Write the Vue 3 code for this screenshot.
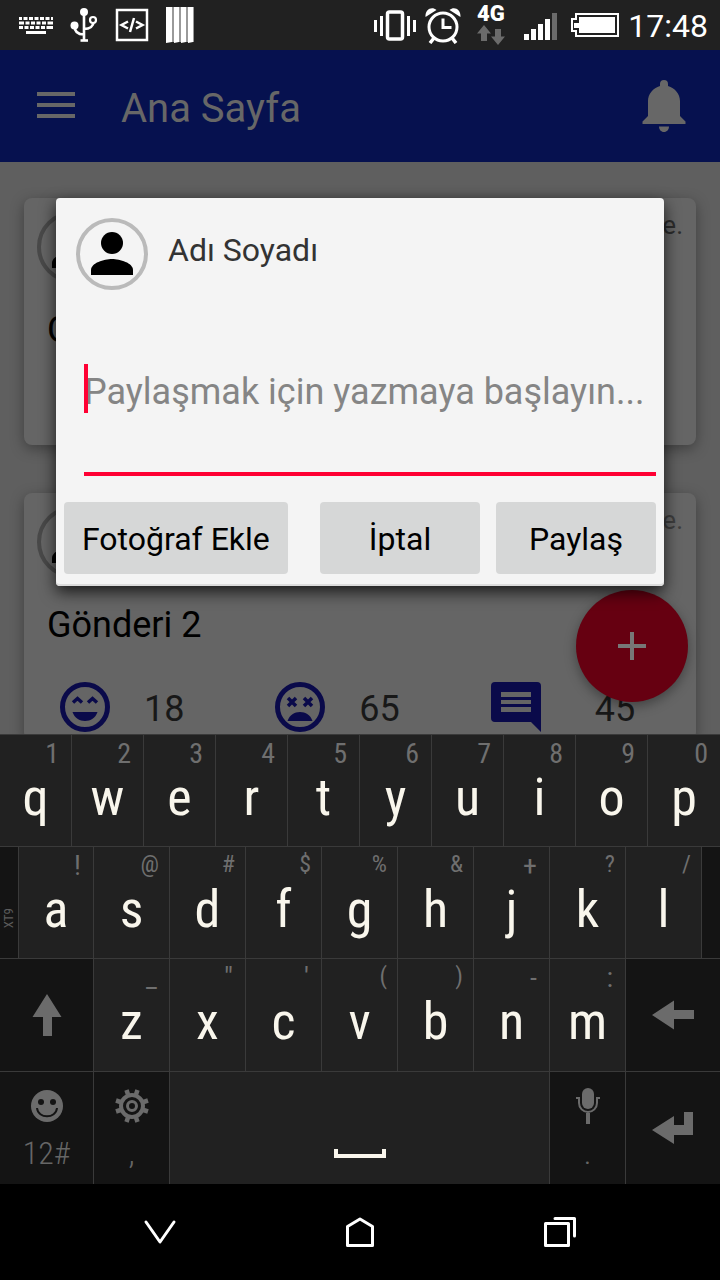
<script setup>
import { ref } from 'vue'

const posts = [
  { id: 1, title: 'Gönderi 1', when: 'önce.', likes: 18, dislikes: 65, comments: 45 },
  { id: 2, title: 'Gönderi 2', when: 'önce.', likes: 18, dislikes: 65, comments: 45 },
]
const message = ref('')

const k = (label, hint, small = false) => ({ label, hint, small })
const topRow = [...'qwertyuiop'].map((c, i) => k(c, String((i + 1) % 10)))
const homeRow = [
  k('a', '!'), k('s', '@', true), k('d', '#', true), k('f', '$', true), k('g', '%', true),
  k('h', '&', true), k('j', '+'), k('k', '?', true), k('l', '/', true),
]
const lowRow = [
  k('z', '_'), k('x', '"'), k('c', "'"), k('v', '(', true), k('b', ')', true), k('n', '-'), k('m', ':'),
]
</script>

<template>
  <div class="screen">
    <div class="status">
      <div class="tray">
        <svg width="34" height="36" viewBox="0 0 34 36" fill="none" stroke="#fff">
          <path d="M0 11.500h34" stroke-width="3" stroke-dasharray="3 1.5 4 1.5 4 1.5 4 1.5 4 1.5 4 1.5 3" />
          <path d="M0 16h34" stroke-width="3" stroke-dasharray="5 1.5 4 1.5 4 1.5 4 1.5 4 1.5 6 1" />
          <path d="M0 20.500h34" stroke-width="3" stroke-dasharray="4 1.5 4 1.5 4 1.5 4 1.5 4 1.5 7 1" />
          <path d="M7 25.500h20" stroke-width="3" />
        </svg>
        <svg width="28" height="36" viewBox="0 0 28 36" fill="none" stroke="#fff" stroke-width="2.6">
          <path d="M14 4v30M4.500 19c0 5 3 8.500 9.500 8.500M14 22c6 0 9.500-3 9.500-7" />
          <circle cx="14" cy="5" r="4" fill="#fff" stroke="none" />
          <circle cx="4.500" cy="18.500" r="4" fill="#fff" stroke="none" />
          <circle cx="23" cy="13" r="3" stroke-width="2.2" />
          <path d="M10.500 33.500h7.500" />
        </svg>
        <svg width="34" height="36" viewBox="0 0 34 36" fill="none" stroke="#fff">
          <path d="M2 3h30v30H2z" stroke-width="2.500" />
          <path d="M13 14.500l-6.500 3.500 6.500 3.500M21 14.500l6.500 3.500-6.500 3.500M19 11l-4 14" stroke-width="2.500" />
        </svg>
        <svg width="30" height="36" viewBox="0 0 30 36">
          <path d="M0 0h28v35H0z" fill="#9a9a9a" />
          <path d="M0 0h6v35l-6 1zM8 0h5v35l-5 1zM15 0h5v35l-5 1zM22 0h5v35l-5 1z" fill="#fff" />
        </svg>
      </div>
      <div class="tray right">
        <svg width="42" height="36" viewBox="0 0 42 36" fill="none" stroke="#fff">
          <rect x="13.500" y="5" width="15" height="27" rx="2" stroke-width="3.500" />
          <path d="M1.500 13v12M7.500 9v20M34.500 9v20M40.500 13v12" stroke-width="3" />
        </svg>
        <svg width="38" height="38" viewBox="0 0 38 38" fill="none" stroke="#fff">
          <circle cx="19" cy="21" r="14" stroke-width="3" />
          <path d="M19 12.500v9h8.500" stroke-width="3" />
          <path d="M10 32l-4 5M28 32l4 5" stroke-width="3.500" />
          <path d="M1.500 11C1 3 8 0 12.500 4zM36.500 11C37 3 30 0 25.500 4z" fill="#fff" stroke="none" />
        </svg>
        <svg width="38" height="50" viewBox="0 0 38 50">
          <text x="7" y="21" class="net">4G</text>
          <path d="M14 25l7 8.500h-4V41h-6v-7.500H7z" fill="#6b6b6b" />
          <path d="M28 45l7-8.500h-4V29h-6v7.500h-4z" fill="#6b6b6b" />
        </svg>
        <svg width="46" height="36" viewBox="0 0 46 36">
          <path d="M8 27h5v6H8zM15 22h5v11h-5zM22 17h5v16h-5zM29 12h5v21h-5z" fill="#fff" />
          <path d="M36 6h5v27h-5z" fill="#6b6b6b" />
        </svg>
        <svg width="50" height="36" viewBox="0 0 50 36">
          <path d="M6 7h42v22H6v-5H2V12h4z" fill="none" stroke="#fff" stroke-width="2" />
          <path d="M9 10h36v16H9v-5H4v-5h5z" fill="#fff" />
        </svg>
        <time>17:48</time>
      </div>
    </div>

    <div class="app">
      <header class="bar">
        <button class="plain" aria-label="Menü">
          <svg width="38" height="28" viewBox="0 0 38 28" stroke="#676767" stroke-width="4">
            <path d="M0 2h38M0 13h38M0 24h38" />
          </svg>
        </button>
        <h1>Ana Sayfa</h1>
        <button class="plain" aria-label="Bildirimler">
          <svg width="44" height="52" viewBox="0 0 44 52" fill="#676767">
            <path d="M18 6V4a4 4 0 0 1 8 0v2c7 2 12 8 12 15v15l5.500 5.500V44H.500v-2.500L6 36V21c0-7 5-13 12-15zM17 46.500h10c0 3-2 5.500-5 5.500s-5-2.500-5-5.500z" />
          </svg>
        </button>
      </header>

      <main class="feed">
        <article v-for="p in posts" :key="p.id" class="card" :class="{ seen: p.id === 2 }">
          <div class="card-head">
            <svg class="avatar" viewBox="0 0 72 72">
              <circle cx="36" cy="36" r="34" fill="none" stroke="#494949" stroke-width="4" />
              <circle cx="36" cy="25" r="11" />
              <path d="M15 57v-5c0-7 13-11 21-11s21 4 21 11v5z" />
            </svg>
            <span class="when">{{ p.when }}</span>
          </div>
          <h2>{{ p.title }}</h2>
          <div class="stats">
            <span class="stat">
              <svg width="50" height="50" viewBox="0 0 50 50" fill="none" stroke="#0a0a4a">
                <circle cx="25" cy="25" r="22.500" stroke-width="5" />
                <path d="M13 20.500l4.500-4 4.500 4M28 20.500l4.500-4 4.500 4" stroke-width="3.500" />
                <path d="M12.500 30h25c-2 6-7 9-12.500 9s-10.500-3-12.500-9z" fill="#0a0a4a" stroke="none" />
              </svg><span>{{ p.likes }}</span>
            </span>
            <span class="stat">
              <svg width="50" height="50" viewBox="0 0 50 50" fill="none" stroke="#0a0a4a">
                <circle cx="25" cy="25" r="22.500" stroke-width="5" />
                <path d="M13 16l8 8m0-8l-8 8M29 16l8 8m0-8l-8 8" stroke-width="3.500" />
                <path d="M12.500 39h25c-2-6-7-9-12.500-9s-10.500 3-12.500 9z" fill="#0a0a4a" stroke="none" />
              </svg><span>{{ p.dislikes }}</span>
            </span>
            <span class="stat replies">
              <svg width="50" height="50" viewBox="0 0 50 50">
                <path d="M4 0h42a4 4 0 0 1 4 4v46L40 40H4a4 4 0 0 1-4-4V4a4 4 0 0 1 4-4z" fill="#0a0a4a" />
                <path d="M10 10h30v5H10zM10 18h30v4H10zM10 25h30v5H10z" fill="#656565" />
              </svg><span>{{ p.comments }}</span>
            </span>
          </div>
        </article>
        <button class="fab" aria-label="Yeni gönderi">
          <svg width="28" height="28" viewBox="0 0 28 28" stroke="#777" stroke-width="4"><path d="M14 0v28M0 14h28" /></svg>
        </button>
      </main>

      <div class="overlay">
        <form class="dialog" role="dialog" aria-label="Paylaş" @submit.prevent>
          <div class="author">
            <svg class="avatar" viewBox="0 0 72 72">
              <circle cx="36" cy="36" r="34" fill="none" stroke="#bababa" stroke-width="4" />
              <circle cx="36" cy="25" r="11" />
              <path d="M15 57v-5c0-7 13-11 21-11s21 4 21 11v5z" />
            </svg>
            <span>Adı Soyadı</span>
          </div>
          <div class="field">
            <input v-model="message" type="text" aria-label="Gönderi metni" placeholder="Paylaşmak için yazmaya başlayın..." />
            <i class="caret"></i>
          </div>
          <div class="actions">
            <button type="button" class="photo">Fotoğraf Ekle</button>
            <button type="button">İptal</button>
            <button type="submit">Paylaş</button>
          </div>
        </form>
      </div>
    </div>

    <div class="keyboard">
      <div class="row r1">
        <button v-for="key in topRow" :key="key.label" class="key">
          <small>{{ key.hint }}</small><b>{{ key.label }}</b>
        </button>
      </div>
      <div class="row r2">
        <button class="key dark side"><span>XT9</span></button>
        <button v-for="key in homeRow" :key="key.label" class="key" :class="{ tiny: key.small }">
          <small>{{ key.hint }}</small><b>{{ key.label }}</b>
        </button>
        <span class="key dark"></span>
      </div>
      <div class="row r3">
        <button class="key dark mid" aria-label="Shift">
          <svg width="30" height="42" viewBox="0 0 30 42" fill="#6b6b6b"><path d="M15 0l14.500 23H20v19h-9V23H.500z" /></svg>
        </button>
        <button v-for="key in lowRow" :key="key.label" class="key" :class="{ tiny: key.small }">
          <small>{{ key.hint }}</small><b>{{ key.label }}</b>
        </button>
        <button class="key dark mid" aria-label="Sil">
          <svg width="42" height="30" viewBox="0 0 42 30" fill="#6b6b6b"><path d="M0 15L22 .500V10h20v9H22v10.500z" /></svg>
        </button>
      </div>
      <div class="row r4">
        <button class="key dark duo">
          <svg width="34" height="34" viewBox="0 0 34 34">
            <circle cx="17" cy="17" r="16" fill="#6b6b6b" />
            <circle cx="11" cy="13" r="3" fill="#141414" /><circle cx="23" cy="13" r="3" fill="#141414" />
            <path d="M7 19c1 11 19 11 20 0" fill="none" stroke="#141414" stroke-width="2" />
          </svg>
          <span>12#</span>
        </button>
        <button class="key dark duo">
          <svg width="34" height="34" viewBox="0 0 34 34" fill="none" stroke="#6b6b6b">
            <circle cx="17" cy="17" r="11" stroke-width="4" />
            <circle cx="17" cy="17" r="4.500" stroke-width="3" />
            <path d="M13 5.500L11.500 1M21 5.500L22.500 1M13 28.500L11.500 33M21 28.500L22.500 33M5.500 13L1 11.500M5.500 21L1 22.500M28.500 13l4.500-1.500M28.500 21l4.500 1.500" stroke-width="4.500" />
          </svg>
          <span>,</span>
        </button>
        <button class="key space" aria-label="Boşluk">
          <svg width="52" height="10" viewBox="0 0 52 10" fill="none" stroke="#f9f6ec" stroke-width="4"><path d="M2 0v7h48V0" /></svg>
        </button>
        <button class="key dark duo">
          <svg width="26" height="36" viewBox="0 0 26 36" fill="none" stroke="#6b6b6b">
            <rect x="7" y="0" width="12" height="21" rx="6" fill="#6b6b6b" stroke="none" />
            <path d="M1 10h3v5a9 9 0 0 0 18 0v-5h3" stroke-width="2" />
            <path d="M13 25v11" stroke-width="4" />
          </svg>
          <span>.</span>
        </button>
        <button class="key dark mid" aria-label="Enter">
          <svg width="42" height="34" viewBox="0 0 42 34" fill="#6b6b6b"><path d="M0 19L22 5v9h10V1h9v23H22v9z" /></svg>
        </button>
      </div>
    </div>

    <nav class="nav">
      <button class="plain" aria-label="Geri">
        <svg width="34" height="32" viewBox="0 0 34 32"><path d="M3 6l14 20L31 6" /></svg>
      </button>
      <button class="plain" aria-label="Ana ekran">
        <svg width="34" height="32" viewBox="0 0 34 32"><path d="M4.500 10.500L17 3l12.500 7.500v19h-25z" /></svg>
      </button>
      <button class="plain" aria-label="Son uygulamalar">
        <svg width="34" height="32" viewBox="0 0 34 32"><path d="M2.500 7.500h23v22h-23zM12 2.500h19.500V20" /></svg>
      </button>
    </nav>
  </div>
</template>

<style>
body { margin: 0; background: #000; }
</style>

<style scoped>
.screen {
  min-height: 100vh;
  display: flex;
  flex-direction: column;
  font-family: Roboto, "Noto Sans", sans-serif;
}
* { box-sizing: border-box; }
button, input { font: inherit; margin: 0; padding: 0; border: 0; border-radius: 0; }
svg { display: block; flex: none; }
.plain { background: none; }

.status {
  height: 50px;
  padding: 0 12px 0 19px;
  display: flex;
  justify-content: space-between;
  background: #212121;
}
.tray { display: flex; align-items: center; gap: 17px; }
.tray.right { gap: 8px; }
.net { font: 900 22px Roboto, sans-serif; fill: #fff; }
time { padding-top: 2px; font-size: 32px; color: #fff; }

.app { flex: 1; position: relative; display: flex; flex-direction: column; }
.bar {
  height: 112px;
  padding: 0 34px 0 37px;
  display: flex;
  align-items: center;
  background: #06114f;
}
.bar h1 { flex: 1; margin: 4px 0 0 46px; font-size: 40px; font-weight: 400; color: #676767; }

.feed {
  flex: 1 1 0;
  min-height: 480px;
  padding: 36px 24px 0;
  display: flex;
  flex-direction: column;
  gap: 48px;
  overflow: hidden;
  position: relative;
  background: #5f5f5f;
}
.card {
  flex: none;
  padding: 13px 13px 8px;
  border-radius: 8px;
  background: #656565;
  box-shadow: 0 4px 14px rgba(0, 0, 0, .35);
}
.card-head { display: flex; justify-content: space-between; }
.avatar { width: 72px; height: 72px; }
.when { font-size: 26px; line-height: 28px; color: #2c2c2c; }
.seen .when { color: #3e3e3e; }
.card h2 { margin: 27px 10px 0; font-size: 36px; line-height: 40px; font-weight: 400; color: #000; }
.stats { display: grid; grid-template-columns: repeat(3, 1fr); margin-top: 37px; }
.stat { display: flex; gap: 34px; height: 50px; padding-left: 23px; font-size: 36px; line-height: 54px; color: #181818; }
.stat.replies { gap: 54px; }
.fab {
  position: absolute;
  right: 32px;
  bottom: 32px;
  width: 112px;
  height: 112px;
  border-radius: 50%;
  display: grid;
  place-items: center;
  background: #660011;
  box-shadow: 0 4px 12px rgba(0, 0, 0, .35);
}

.overlay {
  position: absolute;
  inset: 0;
  padding: 0 56px;
  display: flex;
  align-items: center;
}
.dialog {
  flex: 1;
  min-width: 0;
  padding: 20px 8px 12px;
  border-radius: 4px;
  background: #f4f4f4;
  box-shadow: 0 6px 16px rgba(0, 0, 0, .75), inset 0 -2px 0 #dcdcdc;
}
.author { display: flex; gap: 20px; margin-left: 12px; font-size: 32px; line-height: 64px; color: #333; }
.field { position: relative; margin: 74px 0 26px 20px; }
.field input {
  display: block;
  width: 100%;
  height: 112px;
  padding: 4px 0 56px;
  border-bottom: 4px solid #ff0033;
  background: none;
  outline: none;
  font-size: 36px;
  color: #000;
}
.field input::placeholder { color: #858585; opacity: 1; }
.caret { position: absolute; left: 0; top: 0; width: 4px; height: 49px; background: #ff0033; }
.actions { display: flex; gap: 16px; }
.actions button {
  min-width: 160px;
  height: 72px;
  padding: 2px 16px 0;
  border-radius: 4px;
  background: #d6d7d7;
  font-size: 32px;
  color: #000;
}
.actions .photo { margin-right: auto; padding: 2px 18px 0; }

.keyboard { font-family: "Roboto Condensed", "Liberation Sans Narrow", Roboto, sans-serif; background: #212121; }
.row { display: grid; }
.r1 { grid-template-columns: repeat(10, 72fr); height: 112px; }
.r2 { grid-template-columns: 19fr 75fr repeat(8, 76fr) 18fr; height: 112px; }
.r3 { grid-template-columns: 94fr repeat(7, 76fr) 94fr; height: 113px; }
.r4 { grid-template-columns: 94fr 76fr 380fr 76fr 94fr; height: 113px; }
.key {
  min-width: 0;
  display: flex;
  flex-direction: column;
  align-items: center;
  background: #212121;
  border-top: 1px solid #3a3a3a;
  border-right: 1px solid #3a3a3a;
  color: #f9f6ec;
}
.key:last-child { border-right: 0; }
.key small { align-self: flex-end; padding-right: 12px; font-size: 28px; line-height: 38px; color: #6f6f6f; }
.key.tiny small { padding-right: 10px; font-size: 24px; line-height: 34px; padding-bottom: 4px; }
.key b { font-size: 52px; line-height: 50px; font-weight: 400; }
.key.dark { background: #141414; }
.key.mid { justify-content: center; }
.key.side { justify-content: flex-end; padding-bottom: 30px; }
.side span { writing-mode: vertical-rl; transform: rotate(180deg); font-size: 13px; line-height: 16px; color: #5c5c5c; }
.key.duo { padding-top: 16px; justify-content: flex-start; }
.duo svg { height: 36px; }
.duo span { margin-top: 10px; font-size: 32px; line-height: 38px; font-weight: 300; color: #666; }
.key.space { justify-content: flex-end; padding-bottom: 25px; }

.nav {
  height: 96px;
  padding: 0 60px;
  display: grid;
  grid-template-columns: repeat(3, 1fr);
  align-items: center;
  justify-items: center;
  background: #000;
}
.nav path { fill: none; stroke: #fff; stroke-width: 3; stroke-linejoin: round; stroke-linecap: round; }
</style>
